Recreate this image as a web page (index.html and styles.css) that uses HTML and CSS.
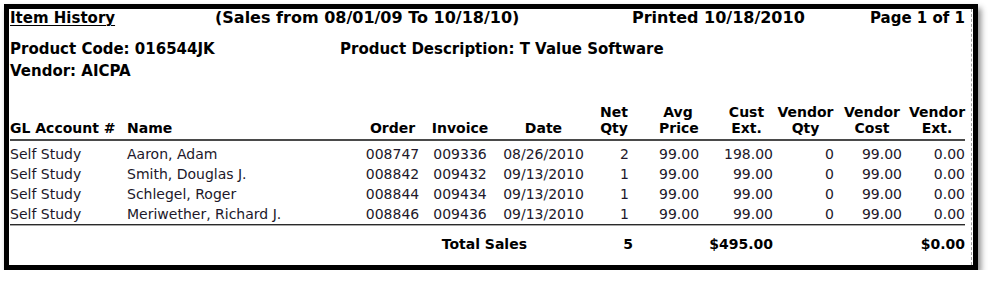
FILE: index.html
```html
<!DOCTYPE html>
<html lang="en">
<head>
<meta charset="utf-8">
<title>Item History</title>
<link rel="stylesheet" href="styles.css">
</head>
<body>
<div class="frame">
  <div class="sheet">
    <div class="title-row">
      <span class="title">Item History</span>
      <span class="range">(Sales from 08/01/09 To 10/18/10)</span>
      <span class="printed">Printed 10/18/2010</span>
      <span class="page">Page 1 of 1</span>
    </div>
    <div class="info">
      <span>Product Code: 016544JK</span>
      <span>Product Description: T Value Software</span>
      <span>Vendor: AICPA</span>
    </div>

    <div class="row head">
      <div class="c-gl">GL Account #</div>
      <div class="c-name">Name</div>
      <div class="c-order">Order</div>
      <div class="c-inv">Invoice</div>
      <div class="c-date">Date</div>
      <div class="num c-nq">Net<br>Qty</div>
      <div class="num c-ap">Avg<br>Price</div>
      <div class="num c-ce">Cust<br>Ext.</div>
      <div class="num c-vq">Vendor<br>Qty</div>
      <div class="num c-vc">Vendor<br>Cost</div>
      <div class="num c-ve">Vendor<br>Ext.</div>
    </div>

    <div class="body">
      <div class="row">
        <div class="c-gl">Self Study</div>
        <div class="c-name">Aaron, Adam</div>
        <div class="c-order">008747</div>
        <div class="c-inv">009336</div>
        <div class="c-date">08/26/2010</div>
        <div class="num c-nq">2</div>
        <div class="num c-ap">99.00</div>
        <div class="num c-ce">198.00</div>
        <div class="num c-vq">0</div>
        <div class="num c-vc">99.00</div>
        <div class="num c-ve">0.00</div>
      </div>
      <div class="row">
        <div class="c-gl">Self Study</div>
        <div class="c-name">Smith, Douglas J.</div>
        <div class="c-order">008842</div>
        <div class="c-inv">009432</div>
        <div class="c-date">09/13/2010</div>
        <div class="num c-nq">1</div>
        <div class="num c-ap">99.00</div>
        <div class="num c-ce">99.00</div>
        <div class="num c-vq">0</div>
        <div class="num c-vc">99.00</div>
        <div class="num c-ve">0.00</div>
      </div>
      <div class="row">
        <div class="c-gl">Self Study</div>
        <div class="c-name">Schlegel, Roger</div>
        <div class="c-order">008844</div>
        <div class="c-inv">009434</div>
        <div class="c-date">09/13/2010</div>
        <div class="num c-nq">1</div>
        <div class="num c-ap">99.00</div>
        <div class="num c-ce">99.00</div>
        <div class="num c-vq">0</div>
        <div class="num c-vc">99.00</div>
        <div class="num c-ve">0.00</div>
      </div>
      <div class="row">
        <div class="c-gl">Self Study</div>
        <div class="c-name">Meriwether, Richard J.</div>
        <div class="c-order">008846</div>
        <div class="c-inv">009436</div>
        <div class="c-date">09/13/2010</div>
        <div class="num c-nq">1</div>
        <div class="num c-ap">99.00</div>
        <div class="num c-ce">99.00</div>
        <div class="num c-vq">0</div>
        <div class="num c-vc">99.00</div>
        <div class="num c-ve">0.00</div>
      </div>
    </div>

    <div class="row total">
      <div class="total-label">Total Sales</div>
      <div class="num c-nq total-qty">5</div>
      <div class="num c-ap"></div>
      <div class="num c-ce">$495.00</div>
      <div class="num c-vq"></div>
      <div class="num c-vc"></div>
      <div class="num c-ve">$0.00</div>
    </div>
  </div>
</div>
</body>
</html>
```

FILE: styles.css
```css
html, body {
  margin: 0;
  padding: 0;
  background: #ffffff;
}

body {
  font-family: "DejaVu Sans", Verdana, sans-serif;
  color: #000;
}

.frame {
  margin: 4px 0 0 4px;
  width: 964px;
  height: 256px;
  border: 5px solid #000;
  background: #fff;
  box-shadow: 3px 4px 6px rgba(0, 0, 0, 0.45);
}

.sheet {
  height: 256px;
  box-sizing: border-box;
  margin-right: 1px;
  padding: 0 6px 0 1px;
  border-right: 1px dashed #a0a0a0;
}

/* title line */
.title-row {
  display: grid;
  grid-template-columns: 205px 417px 1fr auto;
  align-items: baseline;
  font-weight: bold;
  font-size: 15px;
  line-height: 18px;
}

.title {
  text-decoration: underline;
  text-decoration-thickness: 1px;
  text-underline-offset: 2px;
}

.range,
.printed {
  font-size: 16px;
}

.info {
  margin-top: 10.5px;
  display: grid;
  grid-template-columns: 330px 1fr;
  font-weight: bold;
  font-size: 15px;
  line-height: 22px;
}

/* table */
.row {
  display: grid;
  grid-template-columns: 117px 238px 55px 80px 87px 42px 68px 76px 61px 68px 63px;
  font-size: 14px;
  line-height: 20px;
  color: #21182a;
}

.row > div {
  white-space: nowrap;
}

.c-order,
.c-inv,
.c-date {
  text-align: center;
}

.num {
  text-align: right;
}

.c-nq { padding-left: 12px; }
.c-ap { padding-left: 30px; }
.c-ce { padding-left: 23px; }
.c-vq { padding-left: 4px; }
.c-vc { padding-left: 8px; }
.c-ve { padding-left: 7px; }

.head {
  margin-top: 22px;
  padding-bottom: 3px;
  border-bottom: 2px solid #4a4a4a;
  font-weight: bold;
  line-height: 16px;
  color: #000;
  align-items: end;
}

.head .num {
  text-align: center;
}

.body {
  padding-top: 3px;
}

.total {
  border-top: 1px solid #2a2a2a;
  box-shadow: inset 0 1px 0 #a8a8a8;
  padding-top: 9.5px;
  font-weight: bold;
  color: #000;
}

.total .num {
  padding-left: 0;
}

.total .total-qty {
  margin-right: -4px;
}

.total-label {
  grid-column: 1 / 6;
  text-align: right;
  padding-right: 60px;
}
```
